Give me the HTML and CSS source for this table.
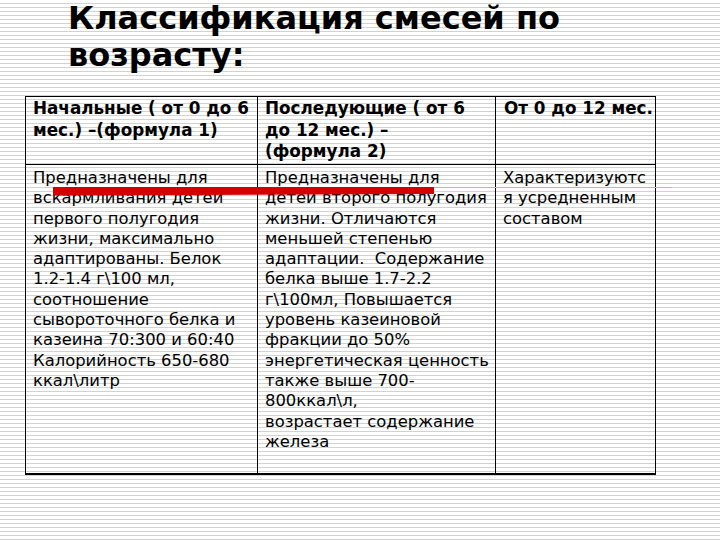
FILE: index.html
```html
<!DOCTYPE html>
<html lang="ru">
<head>
<meta charset="utf-8">
<title>Классификация смесей по возрасту</title>
<link rel="stylesheet" href="styles.css">
</head>
<body>
<div class="slide">
  <h1 class="title">Классификация смесей по возрасту:</h1>
  <table class="grid">
    <colgroup>
      <col class="c1"><col class="c2"><col class="c3">
    </colgroup>
    <tr class="head">
      <th>Начальные ( от 0 до 6 мес.) –(формула 1)</th>
      <th>Последующие ( от 6 до 12 мес.) –<br>(формула 2)</th>
      <th class="nowrap">От 0 до 12 мес.</th>
    </tr>
    <tr class="body">
      <td>Предназначены для вскармливания детей первого полугодия жизни, максимально адаптированы. Белок 1.2-1.4 г\100 мл, соотношение сывороточного белка и казеина 70:300 и 60:40 Калорийность 650-680 ккал\литр</td>
      <td>Предназначены для детей второго полугодия жизни. Отличаются меньшей степенью адаптации.&nbsp; Содержание белка выше 1.7-2.2 г\100мл, Повышается уровень казеиновой фракции до 50% энергетическая ценность также выше 700-800ккал\л,<br>возрастает содержание железа</td>
      <td>Характеризуютс я усредненным составом</td>
    </tr>
  </table>
  <svg class="stroke" width="720" height="540" viewBox="0 0 720 540">
    <line x1="430" y1="187.5" x2="672" y2="187.5" stroke="#e8a88e" stroke-width="1"/>
    <polygon points="53,187 434,187 434,194 53,195.5" fill="#d40000"/>
  </svg>
</div>
</body>
</html>
```
FILE: styles.css
```css
html, body {
  margin: 0;
  padding: 0;
}
body {
  width: 720px;
  height: 540px;
  overflow: hidden;
  background: repeating-linear-gradient(to bottom, #ffffff 0, #ffffff 3px, #d2d2d2 3px, #d2d2d2 4px);
  font-family: "DejaVu Sans", Verdana, sans-serif;
  color: #000;
}
.slide {
  position: relative;
  width: 720px;
  height: 540px;
}
.title {
  margin: 0;
  padding: 0 0 0 68px;
  width: 560px;
  font-family: "DejaVu Sans", Tahoma, sans-serif;
  font-weight: bold;
  font-size: 32px;
  line-height: 37px;
}
.grid {
  margin: 22px 0 0 25px;
  width: 630px;
  border-collapse: collapse;
  table-layout: fixed;
}
.c1 { width: 232px; }
.c2 { width: 238px; }
.c3 { width: 160px; }
.grid th, .grid td {
  border: 1px solid #000;
  vertical-align: top;
  text-align: left;
  padding: 0 3px 0 7px;
}
.grid th {
  font-weight: bold;
  font-size: 16.8px;
  line-height: 21.5px;
  padding-top: 1px;
}
.grid th.nowrap {
  white-space: nowrap;
  padding-left: 8px;
}
.head { height: 68px; }
.body { height: 309px; }
.grid td {
  font-size: 16.4px;
  line-height: 20.3px;
  padding-top: 3px;
}
.grid tr.body td { border-bottom-width: 2px; }
.stroke {
  position: absolute;
  left: 0;
  top: 0;
  pointer-events: none;
}
```
